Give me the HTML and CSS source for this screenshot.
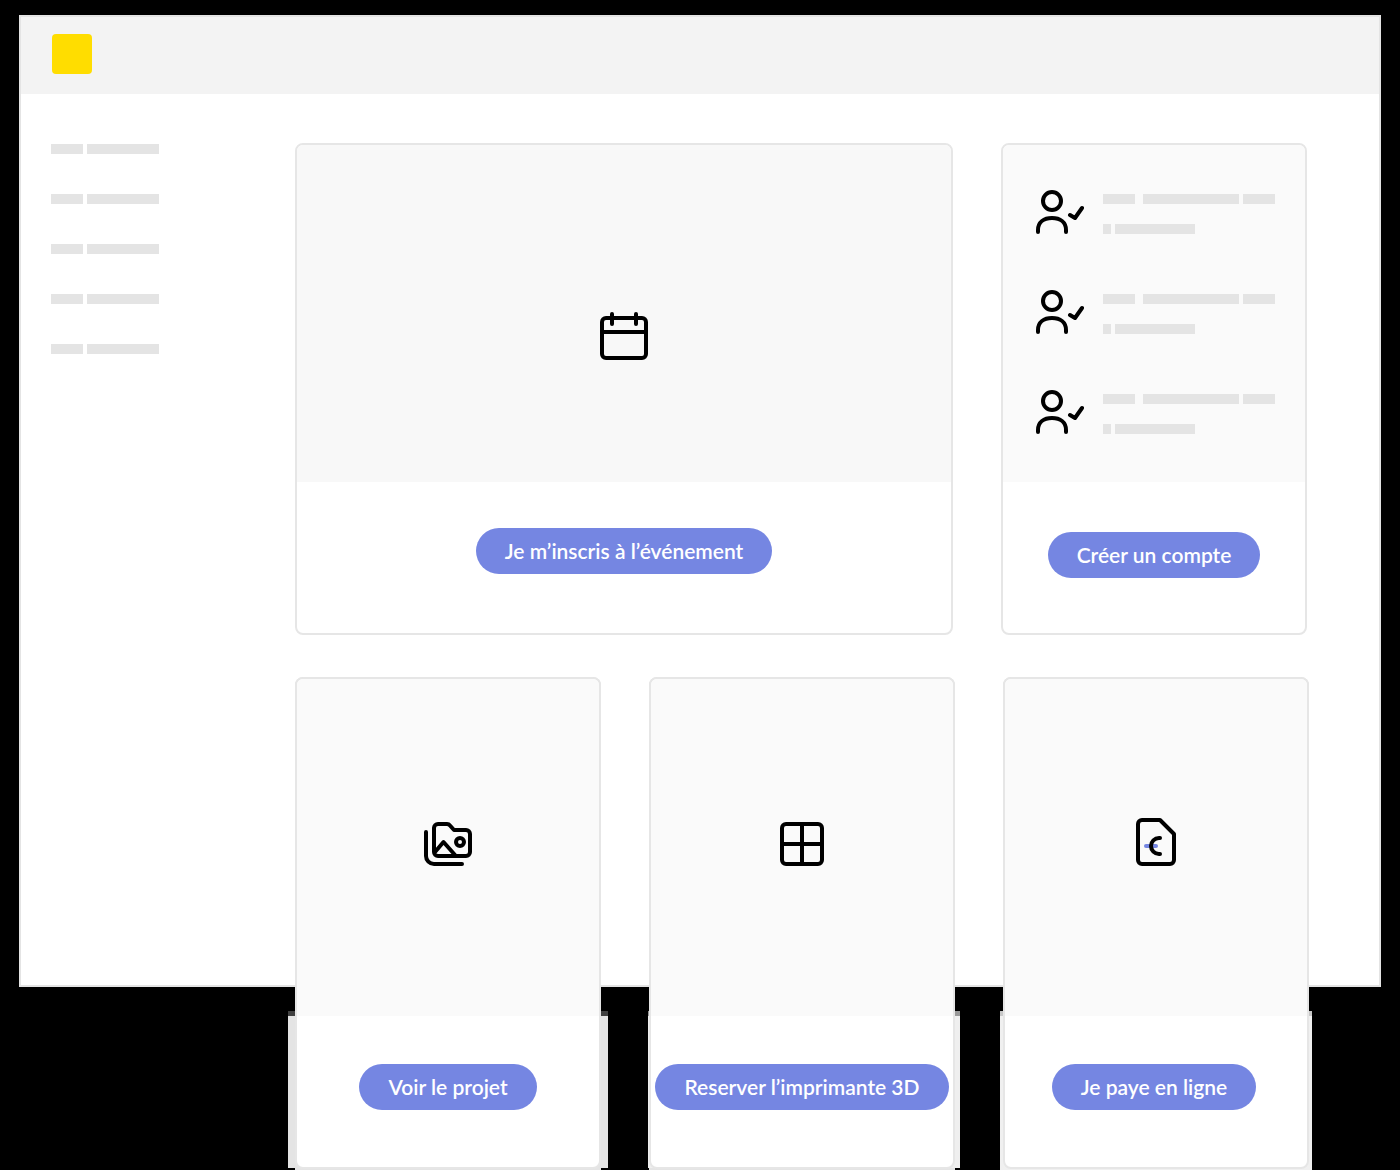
FILE: index.html
```html
<!DOCTYPE html>
<html lang="fr">
<head>
<meta charset="utf-8">
<meta name="viewport" content="width=device-width, initial-scale=1">
<title>Services</title>
<link rel="stylesheet" href="styles.css">
</head>
<body>
<svg class="sprite" aria-hidden="true">
  <symbol id="user-check" viewBox="0 0 48 44">
    <circle cx="16" cy="11" r="9"/>
    <path d="M2 42v-2C2 32 8 28 16 28s14 4 14 12v2M34 25l5 3 7-10"/>
  </symbol>
</svg>
<div class="frame">
  <header class="topbar"><span class="logo"></span></header>
  <div class="body">
    <nav class="sidebar">
      <div class="line"><i class="bar w32"></i><i class="bar w72"></i></div>
      <div class="line"><i class="bar w32"></i><i class="bar w72"></i></div>
      <div class="line"><i class="bar w32"></i><i class="bar w72"></i></div>
      <div class="line"><i class="bar w32"></i><i class="bar w72"></i></div>
      <div class="line"><i class="bar w32"></i><i class="bar w72"></i></div>
    </nav>
    <main class="content">
      <div class="row row-top">
        <section class="card card-event">
          <div class="media">
            <svg class="icon" width="48" height="48" viewBox="0 0 48 48"><rect x="2" y="6" width="44" height="40" rx="4"/><path d="M2 20h44M12 2v10M36 2v10"/></svg>
          </div>
          <div class="action"><button class="btn" type="button">Je m’inscris à l’événement</button></div>
        </section>
        <section class="card card-account">
          <div class="media">
            <ul class="people">
              <li class="person">
                <svg class="icon" width="48" height="44"><use href="#user-check"/></svg>
                <div class="lines">
                  <div class="line"><i class="bar w32 wide-gap"></i><i class="bar w96"></i><i class="bar w32"></i></div>
                  <div class="line"><i class="bar w8"></i><i class="bar w80"></i></div>
                </div>
              </li>
              <li class="person">
                <svg class="icon" width="48" height="44"><use href="#user-check"/></svg>
                <div class="lines">
                  <div class="line"><i class="bar w32 wide-gap"></i><i class="bar w96"></i><i class="bar w32"></i></div>
                  <div class="line"><i class="bar w8"></i><i class="bar w80"></i></div>
                </div>
              </li>
              <li class="person">
                <svg class="icon" width="48" height="44"><use href="#user-check"/></svg>
                <div class="lines">
                  <div class="line"><i class="bar w32 wide-gap"></i><i class="bar w96"></i><i class="bar w32"></i></div>
                  <div class="line"><i class="bar w8"></i><i class="bar w80"></i></div>
                </div>
              </li>
            </ul>
          </div>
          <div class="action"><button class="btn" type="button">Créer un compte</button></div>
        </section>
      </div>
      <div class="row row-bottom">
        <div class="slot slot-project">
          <section class="card">
            <div class="media">
              <svg class="icon" width="48" height="44" viewBox="0 0 48 44"><path d="M10 6a4 4 0 0 1 4-4h9a4 4 0 0 1 3 1.500L30 8h12a4 4 0 0 1 4 4v18a4 4 0 0 1-4 4H14a4 4 0 0 1-4-4zM11 30l8.500-10L31 33"/><circle cx="36" cy="20" r="4"/><path d="M2 10v24a8 8 0 0 0 8 8h28"/></svg>
            </div>
            <div class="action"><button class="btn" type="button">Voir le projet</button></div>
          </section>
        </div>
        <div class="slot slot-printer">
          <section class="card">
            <div class="media">
              <svg class="icon" width="44" height="44" viewBox="0 0 44 44"><rect x="2" y="2" width="40" height="40" rx="4"/><path d="M2 22h40M22 2v40"/></svg>
            </div>
            <div class="action"><button class="btn" type="button">Reserver l’imprimante 3D</button></div>
          </section>
        </div>
        <div class="slot slot-payment">
          <section class="card">
            <div class="media">
              <svg class="icon" width="40" height="48" viewBox="0 0 40 48"><path d="M6 2h18l14 14v26a4 4 0 0 1-4 4H6a4 4 0 0 1-4-4V6a4 4 0 0 1 4-4z"/><path class="accent" d="M10 28h10"/><path d="M24 20h-1a8 8 0 0 0 0 16h1"/></svg>
            </div>
            <div class="action"><button class="btn" type="button">Je paye en ligne</button></div>
          </section>
        </div>
      </div>
    </main>
  </div>
</div>
</body>
</html>
```
FILE: styles.css
```css
* {
  box-sizing: border-box;
}

/* The bottom padding makes room for the cards that hang below the frame. */
body {
  margin: 0;
  padding: 15px 19px 183px;
  background: #000;
  font-family: Lato, "Liberation Sans", sans-serif;
}

.sprite {
  display: none;
}

.frame {
  background: #fff;
  border: 2px solid #e4e4e4;
}

.topbar {
  display: flex;
  padding: 17px 31px 20px;
  background: #f3f3f3;
}

.logo {
  width: 40px;
  height: 40px;
  border-radius: 4px;
  background: #ffdd00;
}

.body {
  display: flex;
  padding: 49px 70px 0 30px;
}

.sidebar {
  display: flex;
  flex: 0 0 244px;
  flex-direction: column;
  gap: 40px;
  padding-top: 1px;
}

/* The last row of cards hangs below the frame. */
.content {
  flex: 1;
  min-width: 0;
  margin-bottom: -184px;
}

.line {
  display: flex;
  gap: 4px;
}

.bar {
  height: 10px;
  background: #e4e4e4;
}

.w8 { width: 8px; }
.w32 { width: 32px; }
.w72 { width: 72px; }
.w80 { width: 80px; }
.w96 { width: 96px; }

.wide-gap {
  margin-right: 4px;
}

.row {
  display: grid;
  gap: 48px;
}

.row-top {
  grid-template-columns: 658fr 306fr;
  padding-right: 2px;
  margin-bottom: 42px;
}

.row-bottom {
  grid-template-columns: repeat(3, 1fr);
}

.card {
  overflow: hidden;
  border: 2px solid #e6e6e6;
  border-radius: 8px;
  background: #fff;
}

.media {
  display: flex;
  justify-content: center;
  height: 337px;
  padding-top: 143px;
  background: #fafafa;
}

.action {
  display: flex;
  justify-content: center;
  height: 151px;
  padding-top: 48px;
}

.card-event .media {
  padding-top: 167px;
  background: #f8f8f8;
}

.card-event .action {
  padding-top: 46px;
}

.card-account .media {
  justify-content: flex-start;
  padding: 45px 0 0 33px;
}

.card-account .action {
  padding-top: 50px;
}

.slot-payment .media {
  padding-top: 139px;
}

.slot-payment .action {
  padding-right: 4px;
}

.icon {
  flex: none;
  fill: none;
  stroke: #000;
  stroke-width: 4px;
  stroke-linecap: round;
  stroke-linejoin: round;
}

.accent {
  stroke: #7586e2;
}

.people {
  display: flex;
  flex-direction: column;
  gap: 56px;
  margin: 0;
  padding: 0;
  list-style: none;
}

.person {
  display: flex;
  gap: 19px;
}

.lines {
  display: flex;
  flex-direction: column;
  gap: 20px;
  padding-top: 4px;
}

.btn {
  height: 46px;
  padding: 0 29px;
  border: 0;
  border-radius: 23px;
  background: #7586e2;
  color: #fff;
  font: 600 21px/46px Lato, "Liberation Sans", sans-serif;
  white-space: nowrap;
}

/* Flat slab behind each hanging card. */
.slot {
  position: relative;
  isolation: isolate;
  border-radius: 8px 8px 0 0;
  background: #e4e4e4;
  box-shadow: 0 1px #e4e4e4;
}

.slot::before {
  content: "";
  position: absolute;
  z-index: -1;
  top: 334px;
  bottom: 1px;
  border-top: 5px solid #404040;
  background: #e4e4e4;
}

.slot-project::before {
  left: -7px;
  right: -7px;
}

.slot-printer::before {
  left: -1px;
  right: -5px;
  border-color: #999;
  background: #efefef;
}

.slot-payment::before {
  left: -3px;
  right: -3px;
  bottom: -1px;
  border-color: #c8c8c8;
  background: #f0f0f0;
}
```
